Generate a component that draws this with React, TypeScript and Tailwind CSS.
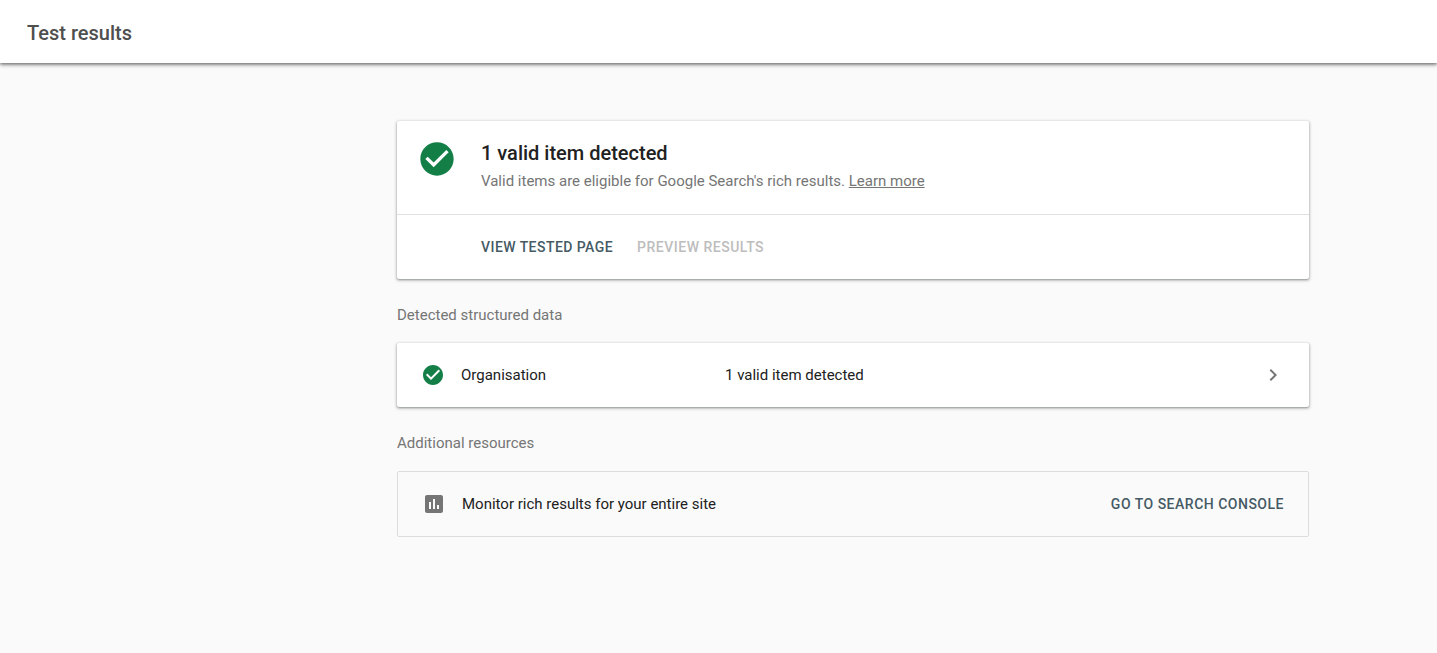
const cardShadow = 'shadow-[0_1px_3px_1px_rgba(60,64,67,0.2),0_1px_2px_0_rgba(60,64,67,0.4)]'

function CheckCircle({ className }: { className: string }) {
  return (
    <svg viewBox="0 0 24 24" className={className} fill="#137f47">
      <path d="M12 2C6.48 2 2 6.48 2 12s4.48 10 10 10 10-4.48 10-10S17.52 2 12 2zm-2 15-5-5 1.41-1.41L10 14.17l7.59-7.59L19 8l-9 9z" />
    </svg>
  )
}

export default function App() {
  return (
    <div className="min-h-[653px] bg-[#fafafa] font-['Roboto',sans-serif]">
      <header className="flex h-[63px] items-center bg-white pl-[27px] shadow-[0_1px_3px_0_rgba(0,0,0,0.4),0_2px_4px_rgba(0,0,0,0.3)]">
        <h1 className="mt-[2px] text-[20px] font-medium leading-[26px] text-[#4f4f4f]">Test results</h1>
      </header>

      <main className="ml-[397px] w-[912px] pt-[58px]">
        <section className={`rounded-[2px] bg-white ${cardShadow}`}>
          <div className="flex h-[94px] border-b border-[#e0e0e0]">
            <div className="w-[84px] pl-[20px] pt-[18px]">
              <CheckCircle className="size-[40px]" />
            </div>
            <div className="pt-[19px]">
              <h2 className="text-[20px] font-medium leading-[26px] text-[#212121]">1 valid item detected</h2>
              <p className="mt-[5px] text-[15px] leading-[20px] text-[#757575]">
                Valid items are eligible for Google Search's rich results.{' '}
                <a className="underline">Learn more</a>
              </p>
            </div>
          </div>
          <div className="flex h-[64px] items-center gap-[24px] pl-[84px] text-[14px] font-medium tracking-[0.45px]">
            <span className="text-[#455a64]">VIEW TESTED PAGE</span>
            <span className="tracking-[0.5px] text-[#bdbdbd]">PREVIEW RESULTS</span>
          </div>
        </section>

        <h3 className="mt-[26px] text-[15px] leading-[20px] text-[#757575]">Detected structured data</h3>

        <section className={`mt-[18px] flex h-[64px] items-center rounded-[2px] bg-white pl-[24px] text-[15px] text-[#212121] ${cardShadow}`}>
          <CheckCircle className="size-[24px]" />
          <span className="ml-[16px] w-[264px]">Organisation</span>
          <span>1 valid item detected</span>
          <svg viewBox="0 0 24 24" className="ml-auto mr-[24px] size-[24px]" fill="#757575">
            <path d="M10 6 8.59 7.41 13.17 12l-4.58 4.59L10 18l6-6z" />
          </svg>
        </section>

        <h3 className="mt-[26px] text-[15px] leading-[20px] text-[#757575]">Additional resources</h3>

        <section className="mt-[18px] flex h-[66px] items-center rounded-[2px] border border-[#dcdcdc] pl-[24px] pr-[24px] text-[15px] text-[#212121]">
          <svg viewBox="0 0 24 24" className="size-[24px] shrink-0" fill="#757575">
            <path d="M19 3H5c-1.1 0-2 .9-2 2v14c0 1.1.9 2 2 2h14c1.1 0 2-.9 2-2V5c0-1.1-.9-2-2-2zM9 17H7v-7h2v7zm4 0h-2V7h2v10zm4 0h-2v-4h2v4z" />
          </svg>
          <span className="ml-[16px]">Monitor rich results for your entire site</span>
          <span className="ml-auto text-[14px] font-medium tracking-[0.5px] text-[#455a64]">GO TO SEARCH CONSOLE</span>
        </section>
      </main>
    </div>
  )
}
